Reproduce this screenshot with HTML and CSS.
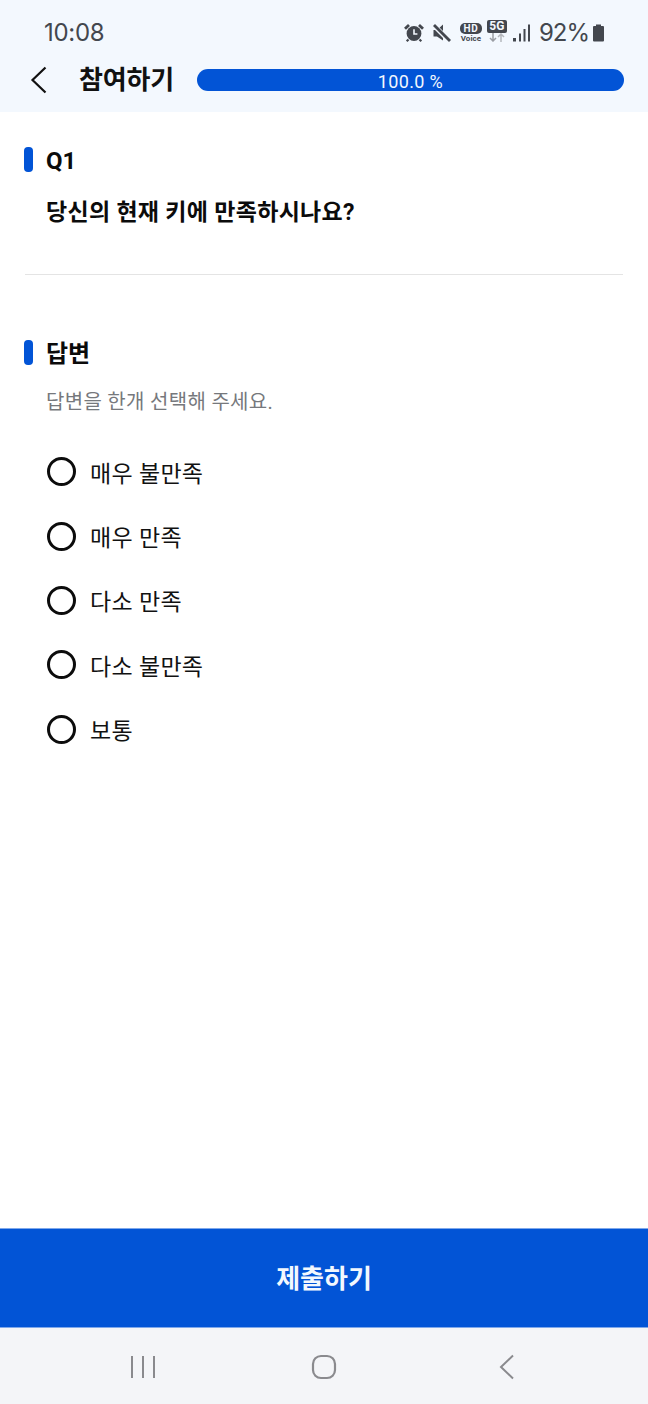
FILE: index.html
```html
<!DOCTYPE html>
<html lang="ko">
<head>
<meta charset="utf-8">
<title>참여하기</title>
<link rel="stylesheet" href="styles.css">
</head>
<body>
<div class="app">
  <header class="top">
    <div class="status">
      <span class="time">10:08</span>
      <div class="status-right">
        <svg class="ic-alarm" width="20" height="20" viewBox="0 0 20 20"><circle cx="10" cy="10.500" r="7.400" fill="#43474e"/><path d="M10 6.200v4.800h3.400" fill="none" stroke="#f3f8fe" stroke-width="1.600"/><path d="M1 5.800 5 2M19 5.800 15 2" stroke="#43474e" stroke-width="2.800" fill="none"/><path d="M4.500 16.500l-1.800 1.800M15.500 16.500l1.800 1.800" stroke="#43474e" stroke-width="2.200" fill="none"/></svg>
        <svg class="ic-mute" width="20" height="20" viewBox="0 0 20 20"><path d="M1.500 7h3.500L11 1.500v16L5 13.500H1.500z" fill="#43474e"/><path d="M1 1.500 18 18.500" stroke="#f3f8fe" stroke-width="5"/><path d="M2 2 18 18" stroke="#43474e" stroke-width="2.800"/></svg>
        <div class="hd"><span class="hd-box">HD</span><span class="hd-sub">Voice</span></div>
        <div class="fiveg"><span class="fiveg-box">5G</span>
          <svg width="18" height="9" viewBox="0 0 18 9"><path d="M5 0v8M2 5l3 3 3-3" fill="none" stroke="#9a9da3" stroke-width="1.500"/><path d="M13 9V1M10 4l3-3 3 3" fill="none" stroke="#b5b8bd" stroke-width="1.500"/></svg>
        </div>
        <svg class="ic-signal" width="18" height="20" viewBox="0 0 18 20"><path d="M0 15h3v3.500H0z" fill="#43474e"/><path d="M6 10.500h2v8H6zM10.500 6h2v12.500h-2zM15 1.500h2v17h-2z" fill="#43474e"/></svg>
        <span class="pct">92%</span>
        <svg class="ic-batt" width="13" height="20" viewBox="0 0 13 20"><path d="M4 1.500h5v1.500h2a1 1 0 0 1 1 1v13.500a1 1 0 0 1-1 1H2a1 1 0 0 1-1-1V4a1 1 0 0 1 1-1h2z" fill="#43474e"/></svg>
      </div>
    </div>
    <div class="titlebar">
      <svg class="back" width="18" height="28" viewBox="0 0 18 28"><path d="M15.500 1.500 2.500 14l13 12.500" fill="none" stroke="#111" stroke-width="2.200"/></svg>
      <h1 class="title">참여하기</h1>
      <div class="progress"><span>100.0 %</span></div>
    </div>
  </header>

  <main class="content">
    <section class="question">
      <h2 class="label">Q1</h2>
      <p class="qtext">당신의 현재 키에 만족하시나요?</p>
    </section>
    <section class="answer">
      <h2 class="label">답변</h2>
      <p class="hint">답변을 한개 선택해 주세요.</p>
      <ul class="options">
        <li class="option"><span class="radio"></span>매우 불만족</li>
        <li class="option"><span class="radio"></span>매우 만족</li>
        <li class="option"><span class="radio"></span>다소 만족</li>
        <li class="option"><span class="radio"></span>다소 불만족</li>
        <li class="option"><span class="radio"></span>보통</li>
      </ul>
    </section>
  </main>

  <button class="submit"><span class="submit-text">제출하기</span></button>

  <nav class="sysnav">
    <svg width="26" height="24" viewBox="0 0 26 24"><path d="M2 1v22M13 1v22M24 1v22" stroke="#8a8a8e" stroke-width="2" fill="none"/></svg>
    <svg width="26" height="26" viewBox="0 0 26 26"><rect x="2" y="2" width="22" height="22" rx="8" fill="none" stroke="#8a8a8e" stroke-width="2.200"/></svg>
    <svg class="nav-back" width="16" height="26" viewBox="0 0 16 26"><path d="M14 1.500 2 13l12 11.500" fill="none" stroke="#8a8a8e" stroke-width="2"/></svg>
  </nav>
</div>
</body>
</html>
```

FILE: styles.css
```css
* { box-sizing: border-box; margin: 0; padding: 0; }
html, body { height: 100%; }
body {
  background: #fff;
  font-family: Roboto, "Noto Sans CJK KR", sans-serif;
  color: #000;
}
.app { width: 648px; height: 1404px; display: flex; flex-direction: column; overflow: hidden; }

.top { height: 112px; background: #f3f8fe; flex: none; }
.status { height: 64px; padding: 20px 43px 0 44px; display: flex; justify-content: space-between; align-items: flex-start; }
.time { font: 400 24px/26px Inter, Roboto, sans-serif; color: #43474e; letter-spacing: -0.3px; }
.status-right { display: flex; align-items: center; height: 26px; }
.ic-alarm { margin-right: 8px; margin-left: -1px; }
.ic-mute { margin-right: 8px; }
.hd { display: flex; flex-direction: column; align-items: center; width: 22px; margin-right: 5px; }
.hd-box { background: #43474e; color: #f3f8fe; font: 700 10px/11px Roboto, sans-serif; letter-spacing: 0.6px; border-radius: 5px; width: 22px; text-align: center; }
.hd-sub { color: #43474e; font: 700 8px/9px Roboto, sans-serif; }
.fiveg { display: flex; flex-direction: column; align-items: center; width: 20px; margin-right: 6px; margin-top: -4px; }
.fiveg-box { background: #43474e; color: #f3f8fe; font: 700 12px/13px Roboto, sans-serif; border-radius: 2px; width: 20px; text-align: center; }
.ic-signal { margin-right: 8px; }
.pct { font: 400 24px/26px Inter, Roboto, sans-serif; color: #43474e; letter-spacing: -1px; }
.ic-batt { margin-left: 3px; }

.titlebar { height: 48px; padding: 0 24px 0 30px; margin-top: -8px; display: flex; align-items: center; }
.back { flex: none; }
.title { font-size: 26px; font-weight: 700; line-height: 32px; color: #111; margin-left: 31px; letter-spacing: -0.2px; }
.progress { flex: 1; height: 22px; margin-left: 23px; background: #0254d6; border-radius: 11px; color: #f3f8fe; font: 400 18px/26px Roboto, sans-serif; text-align: center; letter-spacing: 0.35px; }

.content { flex: 1; padding: 0 25px; }
.question { height: 163px; padding-top: 35px; border-bottom: 1px solid #e4e4e4; }
.answer { padding-top: 65px; }
.label { position: relative; padding-left: 21px; font-size: 24px; font-weight: 700; line-height: 29px; height: 26px; color: #0b0b0b; }
.label::before { content: ""; position: absolute; left: -1px; top: 0; width: 9px; height: 25px; background: #0254d6; border-radius: 4px; }
.qtext { padding: 25px 0 0 21px; font-size: 23px; font-weight: 700; line-height: 30px; color: #0b0b0b; letter-spacing: 0.3px; }
.hint { padding: 22px 0 0 21px; font-size: 20px; line-height: 28px; color: #76787c; letter-spacing: 0.3px; }
.options { list-style: none; padding: 24px 0 0 22px; }
.option { height: 64.400px; display: flex; align-items: center; font-size: 23px; color: #111; padding-bottom: 1px; letter-spacing: 0.3px; }
.radio { width: 29px; height: 29px; border: 3.500px solid #0c0c0c; border-radius: 50%; margin-right: 14px; flex: none; }

.submit { flex: none; height: 100px; border: 0; background: #0254d6; color: #f3f8fe; font-family: inherit; font-size: 26px; font-weight: 700; border-top: 1px solid #7fa8ea; border-bottom: 1px solid #7fa8ea; margin-top: -1px; }
.submit-text { display: block; margin-top: -3px; }

.sysnav { flex: none; height: 76px; background: #f4f5f8; padding: 1px 0 0 130px; display: flex; gap: 155px; align-items: center; }
.nav-back { margin-left: 7px; }
```
